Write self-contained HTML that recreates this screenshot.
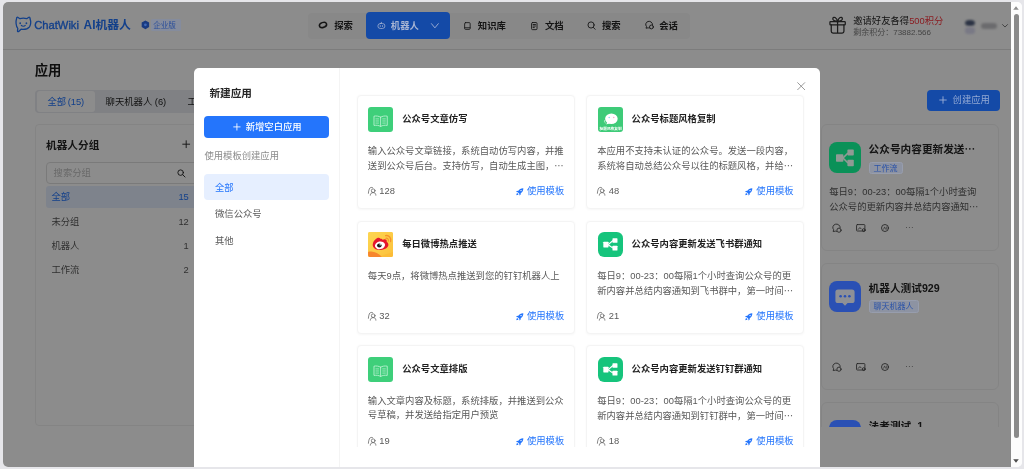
<!DOCTYPE html>
<html lang="zh-CN">
<head>
<meta charset="utf-8">
<title>ChatWiki AI机器人 - 应用</title>
<style>
*{box-sizing:border-box;margin:0;padding:0}
html,body{width:1024px;height:469px;overflow:hidden;background:#e6e6ea}
body{font-family:"Liberation Sans","Noto Sans CJK SC",sans-serif;font-size:9.33px;color:#262626;position:relative}
#win{position:absolute;left:3px;top:2px;width:1018.5px;height:464.8px;border-radius:5px;overflow:hidden;background:#fff;will-change:transform}
#o{position:absolute;left:-3px;top:-2px;width:1024px;height:469px}
#page{position:absolute;left:3px;top:2px;width:1008px;height:465px;background:#fff;overflow:hidden}
#pg{position:absolute;left:-3px;top:-2px;width:1024px;height:469px}
#mask{position:absolute;left:3px;top:2px;width:1008px;height:465px;background:rgba(0,0,0,.45)}
.a{position:absolute}
.t{position:absolute;white-space:nowrap;line-height:14px;height:14px}
svg{position:absolute;overflow:visible}
/* scrollbar */
#sb{position:absolute;left:1011px;top:2px;width:11px;height:465px;background:#fdfdfd}
#sb .thumb{position:absolute;left:2.5px;top:11.8px;width:5.6px;height:424px;border-radius:3px;background:#8b8b8b}
/* header */
#hdr{position:absolute;left:3px;top:2px;width:1008px;height:48px;background:#fff;border-bottom:1px solid #e2e2e2}
#nav{position:absolute;left:308px;top:12.6px;width:381.6px;height:26px;background:#f7f7f8;border-radius:4px}
.nv{font-size:9.33px;font-weight:700;color:#262626;top:19px}
#nvact{position:absolute;left:366px;top:12.3px;width:83.5px;height:26.6px;border-radius:4px;background:#144aa7}
/* body behind */
.bcard{position:absolute;left:821px;width:178px;height:126.6px;border:1px solid #f1f1f1;border-radius:6px;background:#fff}
.tag{position:absolute;height:12.6px;line-height:12.6px;font-size:8px;color:#2a52a8;background:#8d93a2;border:0.5px solid #979dad;border-radius:2.5px;padding:0 4px;white-space:nowrap}
/* modal */
#modal{position:absolute;left:193.6px;top:68px;width:626.7px;height:420px;background:#fff;border-radius:5px;overflow:hidden}
#md{position:absolute;left:-193.6px;top:-68px;width:1024px;height:469px}
.card{position:absolute;width:218.4px;height:113.6px;border:0.7px solid #f4f4f4;border-radius:4px;background:#fff;box-shadow:0 0.6px 2.6px rgba(0,0,0,.035)}
.ic{position:absolute;width:25.2px;height:25.3px;border-radius:3px;overflow:hidden}
.tt{font-weight:700;font-size:9.33px;color:#1f1f1f}
.ds{font-size:9.33px;color:#595959}
.use{font-size:9.33px;color:#2475fc}
</style>
</head>
<body>
<div id="win"><div id="o">
<div id="page"><div id="pg">
<div id="hdr"></div>
<div id="nav"></div>
<svg style="left:14.5px;top:16.1px" width="16.6" height="17.1" viewBox="0 0 32 33" fill="none" stroke="#2475fc" stroke-width="2.5" stroke-linecap="round" stroke-linejoin="round"><path d="M3.2 4.2 C3 2.4 4.6 1.8 6 2.8 L9.4 5.2 C13 4.2 19 4.2 22.6 5.2 L26 2.8 C27.4 1.8 29 2.4 28.8 4.2 C30.6 9.5 30.8 16.5 28 20.8 C24.6 25.2 17.6 26.2 11.6 25.6 L7.2 29.8 C6 30.8 4.6 30.2 4.8 28.6 L5.4 23.8 C1.4 19.6 1.2 10 3.2 4.2 Z"/><path d="M12.2 18.2 C13.8 20.4 18.2 20.4 19.8 18.2" stroke-width="2.2"/><circle cx="10" cy="14" r="1.7" fill="#2475fc" stroke="none"/><circle cx="22" cy="14" r="1.7" fill="#2475fc" stroke="none"/></svg>
<div class="t " style="left:34.2px;top:18.00px;font-size:11.2px;font-weight:400;color:#2475fc;-webkit-text-stroke:0.35px #2475fc">ChatWiki</div>
<div class="t " style="left:83.6px;top:18.00px;font-size:11.85px;font-weight:700;color:#2475fc">AI机器人</div>
<svg style="left:318.4px;top:20.3px" width="10" height="10" viewBox="0 0 10 10" fill="none" stroke="#262626"><ellipse cx="5" cy="5" rx="3.7" ry="2.55" stroke-width="1.5" transform="rotate(-20 5 5)"/><path d="M1.2 6.9 C2.6 7.6 5.6 7.2 8 5.2" stroke-width="0.7" opacity=".7"/></svg>
<div class="t nv" style="left:334.2px;top:19.00px;">探索</div>
<svg style="left:464.2px;top:22px" width="6.8" height="8" viewBox="0 0 13 15.3" fill="none" stroke="#262626" stroke-width="1.6" stroke-linecap="round" stroke-linejoin="round"><rect x="1.2" y="1.2" width="10.6" height="12.9" rx="1.8"/><path d="M1.4 11H11.6"/></svg>
<div class="t nv" style="left:477.8px;top:19.00px;">知识库</div>
<svg style="left:531.2px;top:21.9px" width="6.6" height="8.2" viewBox="0 0 12 15" fill="none" stroke="#262626" stroke-width="1.6" stroke-linecap="round" stroke-linejoin="round" stroke-width="1.5"><rect x="1" y="1" width="10" height="13" rx="1.8"/><path d="M3.8 4.6H8.2M3.8 7.4H8.2M3.8 10.2H6"/></svg>
<div class="t nv" style="left:544.9px;top:19.00px;">文档</div>
<svg style="left:587.2px;top:21.2px" width="9" height="9.4" viewBox="0 0 16 17" fill="none" stroke="#262626" stroke-width="1.6" stroke-linecap="round" stroke-linejoin="round" stroke-width="1.5"><circle cx="7.2" cy="7.2" r="5.6"/><path d="M11.4 11.6 L14.6 15"/></svg>
<div class="t nv" style="left:602px;top:19.00px;">搜索</div>
<svg style="left:644.8px;top:21.4px" width="9.2" height="8.6" viewBox="0 0 10 8.8" fill="none" stroke="#262626" stroke-width="1.0" stroke-linecap="round" stroke-linejoin="round"><path d="M8.2 3.6 A3.7 3.4 0 1 0 1.6 5.6 L1.2 7.6 L3.4 7.1 C3.8 7.3 4.2 7.4 4.6 7.4"/><circle cx="7" cy="6.2" r="2.1"/></svg>
<div class="t nv" style="left:659.2px;top:19.00px;">会话</div>
<svg style="left:828.8px;top:15.9px" width="17.2" height="18" viewBox="0 0 26 27.2" fill="none" stroke="#333" stroke-width="1.9" stroke-linecap="round" stroke-linejoin="round"><rect x="1.4" y="8.6" width="23.2" height="4.8" rx="1"/><path d="M3.4 13.4V23.2A2.6 2.6 0 0 0 6 25.8H20A2.6 2.6 0 0 0 22.6 23.2V13.4M13 8.6V25.8"/><path d="M13 8.4 C9.4 8.2 5 6.6 5.8 3.4 C6.8 0.2 11.6 2.2 13 8.4 C14.4 2.2 19.2 0.2 20.2 3.4 C21 6.6 16.6 8.2 13 8.4Z"/></svg>
<div class="t " style="left:853.2px;top:13.60px;font-size:9.33px;color:#262626">邀请好友各得<span style="color:#fb363f">500积分</span></div>
<div class="t " style="left:853.2px;top:26.00px;font-size:8px;color:#7d7d7d">剩余积分：73882.566</div>
<div class="a" style="left:964.6px;top:19.6px;width:10.8px;height:6.8px;border-radius:50%;filter:blur(1.1px);background:#4f5d7c"></div>
<div class="a" style="left:965.4px;top:26.6px;width:9.4px;height:7px;border-radius:40%;filter:blur(1.2px);background:#dcdcf2"></div>
<div class="a" style="left:980.8px;top:22.8px;width:16.4px;height:6.2px;border-radius:3px;filter:blur(1.1px);background:#c4c4c8"></div>
<svg style="left:1002.2px;top:24.2px" width="6" height="3.6" viewBox="0 0 12 7" fill="none" stroke="#595959" stroke-width="1.6" stroke-linecap="round" stroke-linejoin="round"><path d="M1 1 L6 6 L11 1"/></svg>
<div class="t " style="left:34.8px;top:61.60px;font-size:13.33px;font-weight:700;color:#1a1a1a;height:18px;line-height:18px">应用</div>
<div class="a" style="left:35.4px;top:89.6px;width:300px;height:23px;background:#e9ebf0;border-radius:4px"></div>
<div class="a" style="left:36.8px;top:90.8px;width:58.4px;height:20.8px;background:#fff;border-radius:3px"></div>
<div class="t " style="left:47.6px;top:94.80px;color:#2475fc;word-spacing:-0.9px;letter-spacing:-0.05px">全部 (15)</div>
<div class="t " style="left:105.6px;top:94.80px;color:#262626">聊天机器人 (6)</div>
<div class="t " style="left:187.6px;top:94.80px;color:#262626">工作流 (9)</div>
<div class="a" style="left:35.4px;top:123.8px;width:300px;height:302.6px;border:1px solid #f0f0f0;border-radius:4px;background:#fff"></div>
<div class="t " style="left:46px;top:136.80px;font-size:10.67px;font-weight:700;color:#262626;height:16px;line-height:16px">机器人分组</div>
<svg style="left:182px;top:139.5px" width="8.4" height="8.4" viewBox="0 0 10 10" stroke="#262626" stroke-width="1.1" fill="none"><path d="M5 0.4V9.6M0.4 5H9.6"/></svg>
<div class="a" style="left:46px;top:162.3px;width:170px;height:21.5px;border:1px solid #dedede;border-radius:4px;background:#fff"></div>
<div class="t " style="left:53.6px;top:166.40px;color:#bfbfbf">搜索分组</div>
<svg style="left:177.1px;top:168.8px" width="8.8" height="8.8" viewBox="0 0 16 16" fill="none" stroke="#262626" stroke-width="1.7" stroke-linecap="round"><circle cx="6.6" cy="6.6" r="5"/><path d="M10.4 10.4 L14.6 14.6"/></svg>
<div class="a" style="left:46px;top:186.4px;width:170px;height:21.2px;background:#e6efff;border-radius:3px"></div>
<div class="t " style="left:51.4px;top:190.20px;color:#2475fc">全部</div>
<div class="t" style="left:160px;width:28.8px;text-align:right;top:190.20px;color:#2475fc">15</div>
<div class="t " style="left:51.4px;top:214.60px;color:#595959">未分组</div>
<div class="t" style="left:160px;width:28.8px;text-align:right;top:214.60px;color:#595959">12</div>
<div class="t " style="left:51.4px;top:239.20px;color:#595959">机器人</div>
<div class="t" style="left:160px;width:28.8px;text-align:right;top:239.20px;color:#595959">1</div>
<div class="t " style="left:51.4px;top:263.00px;color:#595959">工作流</div>
<div class="t" style="left:160px;width:28.8px;text-align:right;top:263.00px;color:#595959">2</div>
<div class="a" id="blist" style="left:815px;top:118px;width:196px;height:309px;overflow:hidden"><div class="a" style="left:-815px;top:-118px;width:1024px;height:469px">
<div class="bcard" style="top:124.3px"></div>
<div class="t " style="left:868.6px;top:141.30px;font-size:10.67px;font-weight:700;color:#262626;height:16px;line-height:16px">公众号内容更新发送<span style="font-family:'Noto Sans CJK SC',sans-serif">…</span></div>
<div class="t ds" style="left:829.2px;top:184.50px;">每日9：00-23：00每隔1个小时查询</div>
<div class="t ds" style="left:829.2px;top:198.50px;">公众号的更新内容并总结内容通知<span style="font-family:'Noto Sans CJK SC',sans-serif">…</span></div>
<svg style="left:832.2px;top:223.6px" width="10" height="8.8" viewBox="0 0 10 8.8" fill="none" stroke="#404040" stroke-linecap="round" stroke-linejoin="round" stroke-width="0.85"><path d="M8.2 3.6 A3.7 3.4 0 1 0 1.6 5.6 L1.2 7.6 L3.4 7.1 C3.8 7.3 4.2 7.4 4.6 7.4"/><circle cx="7" cy="6.2" r="2.1"/></svg>
<svg style="left:856.2px;top:223.7px" width="10" height="8.4" viewBox="0 0 18 15" fill="none" stroke="#404040" stroke-linecap="round" stroke-linejoin="round" stroke-width="1.5"><rect x="1" y="1" width="15" height="11.6" rx="1.4"/><path d="M4 9.6 L7 6.4 L9.4 8.8"/><circle cx="14" cy="11" r="2.6"/></svg>
<svg style="left:881px;top:223.8px" width="8" height="8" viewBox="0 0 8 8" fill="none" stroke="#404040" stroke-linecap="round" stroke-linejoin="round" stroke-width="0.85"><circle cx="4" cy="4" r="3.5"/><path d="M2.6 5.2 L3.6 2.9 L4.6 5.2 M5.7 2.9 V5.2" stroke-width="0.6"/></svg>
<div class="a" style="left:905.6px;top:227.1px;width:1.4px;height:1.4px;border-radius:1px;background:#6e6e6e;box-shadow:2.9px 0 #6e6e6e,5.8px 0 #6e6e6e"></div>
<div class="bcard" style="top:263.2px"></div>
<div class="t " style="left:868.6px;top:280.20px;font-size:10.67px;font-weight:700;color:#262626;height:16px;line-height:16px">机器人测试929</div>
<svg style="left:832.2px;top:362.5px" width="10" height="8.8" viewBox="0 0 10 8.8" fill="none" stroke="#404040" stroke-linecap="round" stroke-linejoin="round" stroke-width="0.85"><path d="M8.2 3.6 A3.7 3.4 0 1 0 1.6 5.6 L1.2 7.6 L3.4 7.1 C3.8 7.3 4.2 7.4 4.6 7.4"/><circle cx="7" cy="6.2" r="2.1"/></svg>
<svg style="left:856.2px;top:362.6px" width="10" height="8.4" viewBox="0 0 18 15" fill="none" stroke="#404040" stroke-linecap="round" stroke-linejoin="round" stroke-width="1.5"><rect x="1" y="1" width="15" height="11.6" rx="1.4"/><path d="M4 9.6 L7 6.4 L9.4 8.8"/><circle cx="14" cy="11" r="2.6"/></svg>
<svg style="left:881px;top:362.7px" width="8" height="8" viewBox="0 0 8 8" fill="none" stroke="#404040" stroke-linecap="round" stroke-linejoin="round" stroke-width="0.85"><circle cx="4" cy="4" r="3.5"/><path d="M2.6 5.2 L3.6 2.9 L4.6 5.2 M5.7 2.9 V5.2" stroke-width="0.6"/></svg>
<div class="a" style="left:905.6px;top:366.0px;width:1.4px;height:1.4px;border-radius:1px;background:#6e6e6e;box-shadow:2.9px 0 #6e6e6e,5.8px 0 #6e6e6e"></div>
<div class="bcard" style="top:402.3px"></div>
<div class="t " style="left:868.6px;top:417.90px;font-size:10.67px;font-weight:700;color:#262626;height:16px;line-height:16px">法者测试_1</div>
<svg style="left:832.2px;top:501.6px" width="10" height="8.8" viewBox="0 0 10 8.8" fill="none" stroke="#404040" stroke-linecap="round" stroke-linejoin="round" stroke-width="0.85"><path d="M8.2 3.6 A3.7 3.4 0 1 0 1.6 5.6 L1.2 7.6 L3.4 7.1 C3.8 7.3 4.2 7.4 4.6 7.4"/><circle cx="7" cy="6.2" r="2.1"/></svg>
<svg style="left:856.2px;top:501.7px" width="10" height="8.4" viewBox="0 0 18 15" fill="none" stroke="#404040" stroke-linecap="round" stroke-linejoin="round" stroke-width="1.5"><rect x="1" y="1" width="15" height="11.6" rx="1.4"/><path d="M4 9.6 L7 6.4 L9.4 8.8"/><circle cx="14" cy="11" r="2.6"/></svg>
<svg style="left:881px;top:501.8px" width="8" height="8" viewBox="0 0 8 8" fill="none" stroke="#404040" stroke-linecap="round" stroke-linejoin="round" stroke-width="0.85"><circle cx="4" cy="4" r="3.5"/><path d="M2.6 5.2 L3.6 2.9 L4.6 5.2 M5.7 2.9 V5.2" stroke-width="0.6"/></svg>
<div class="a" style="left:905.6px;top:505.1px;width:1.4px;height:1.4px;border-radius:1px;background:#6e6e6e;box-shadow:2.9px 0 #6e6e6e,5.8px 0 #6e6e6e"></div>
</div></div>
</div></div>
<div id="mask"></div>
<div class="a" style="left:150.6px;top:18.6px;width:30.6px;height:12.4px;background:#858c9d;border-radius:1.5px"></div>
<svg style="left:140.7px;top:20.2px" width="8.8" height="9.6" viewBox="0 0 18 19"><path d="M9 0.6 L16.6 5 V14 L9 18.4 L1.4 14 V5 Z" fill="#193a80"/><circle cx="9" cy="9.5" r="2.8" fill="#3f69b8"/></svg>
<div class="t " style="left:153.2px;top:18.60px;font-size:7.6px;color:#2b4f9a">企业版</div>
<div id="nvact"></div>
<svg style="left:376.6px;top:21.4px" width="8.8" height="9" viewBox="0 0 16 16" fill="none" stroke="#a4b2d2" stroke-width="1.4" stroke-linecap="round"><rect x="1.6" y="4.4" width="12.8" height="9" rx="4.4"/><path d="M8 2.2V4.2M6 8.2V9.8M10 8.2V9.8"/></svg>
<div class="t nv" style="left:390.8px;top:19.00px;color:#a9b6d4;font-weight:700">机器人</div>
<svg style="left:431px;top:22.8px" width="7.8" height="5.6" viewBox="0 0 16 11.5" fill="none" stroke="#9fb0d6" stroke-width="1.9" stroke-linecap="round" stroke-linejoin="round"><path d="M1 1.4 L8 10 L15 1.4"/></svg>
<div class="a" style="left:927px;top:89.6px;width:73px;height:21.2px;background:#144aa7;border-radius:4px"></div>
<svg style="left:938.6px;top:96.2px" width="8" height="8" viewBox="0 0 10 10" stroke="#9fb2d8" stroke-width="1.1" fill="none"><path d="M5 0.4V9.6M0.4 5H9.6"/></svg>
<div class="t " style="left:952.6px;top:93.30px;color:#93a9d4">创建应用</div>
<div class="a" style="left:815px;top:118px;width:196px;height:309px;overflow:hidden"><div class="a" style="left:-815px;top:-118px;width:1024px;height:469px"><div class="a" style="left:829px;top:141.6px;width:32px;height:31.8px;border-radius:8px;background:#0a9158"></div>
<svg style="left:829px;top:141.6px" width="32" height="32" viewBox="0 0 32 32" fill="#8f9a94" stroke="#8f9a94"><rect x="7" y="12.2" width="7.4" height="7.6" rx="0.8" stroke="none"/><rect x="18.4" y="7.6" width="6.4" height="6" rx="0.8" stroke="none"/><rect x="18.4" y="17.8" width="6.4" height="6.4" rx="0.8" stroke="none"/><path d="M14 16 L19 11 M14 16 L19 21" stroke-width="1.6" fill="none"/></svg>
<div class="tag" style="left:868.6px;top:161.5px">工作流</div>
<div class="a" style="left:829px;top:280.5px;width:32px;height:31.8px;border-radius:8px;background:#2a50b4"></div>
<svg style="left:829px;top:280.5px" width="32" height="32" viewBox="0 0 32 32"><path d="M9 8.4 H23 A2.6 2.6 0 0 1 25.6 11 V19.4 A2.6 2.6 0 0 1 23 22 H18.6 L16 24.8 L13.4 22 H9 A2.6 2.6 0 0 1 6.4 19.4 V11 A2.6 2.6 0 0 1 9 8.4 Z" fill="#8e9096"/><circle cx="11.6" cy="15.2" r="1.3" fill="#2a50b4"/><circle cx="16" cy="15.2" r="1.3" fill="#2a50b4"/><circle cx="20.4" cy="15.2" r="1.3" fill="#2a50b4"/></svg>
<div class="tag" style="left:868.6px;top:300.4px">聊天机器人</div>
<div class="a" style="left:829px;top:419.6px;width:32px;height:31.8px;border-radius:8px;background:#2a50b4"></div>
<svg style="left:829px;top:419.6px" width="32" height="32" viewBox="0 0 32 32"><path d="M9 8.4 H23 A2.6 2.6 0 0 1 25.6 11 V19.4 A2.6 2.6 0 0 1 23 22 H18.6 L16 24.8 L13.4 22 H9 A2.6 2.6 0 0 1 6.4 19.4 V11 A2.6 2.6 0 0 1 9 8.4 Z" fill="#8e9096"/><circle cx="11.6" cy="15.2" r="1.3" fill="#2a50b4"/><circle cx="16" cy="15.2" r="1.3" fill="#2a50b4"/><circle cx="20.4" cy="15.2" r="1.3" fill="#2a50b4"/></svg>
<div class="tag" style="left:868.6px;top:439.5px">聊天机器人</div></div></div>
<div id="modal"><div id="md">
<div class="a" style="left:193.6px;top:68px;width:146.6px;height:420px;border-right:1px solid #f4f4f4"></div>
<div class="t " style="left:209.4px;top:84.60px;font-size:10.67px;font-weight:700;color:#262626;height:16px;line-height:16px">新建应用</div>
<div class="a" style="left:204.2px;top:115.9px;width:124.8px;height:21.7px;background:#2475fc;border-radius:4px"></div>
<svg style="left:232.6px;top:122.8px" width="7.8" height="7.8" viewBox="0 0 10 10" stroke="#fff" stroke-width="1.1" fill="none"><path d="M5 0.4V9.6M0.4 5H9.6"/></svg>
<div class="t " style="left:245.7px;top:119.80px;color:#fff;font-weight:500">新增空白应用</div>
<div class="t " style="left:204.4px;top:148.60px;color:#8c8c8c">使用模板创建应用</div>
<div class="a" style="left:204.2px;top:173.5px;width:124.8px;height:26.6px;background:#e6efff;border-radius:4px"></div>
<div class="t " style="left:215px;top:180.50px;color:#2475fc">全部</div>
<div class="t " style="left:215px;top:207.40px;color:#595959">微信公众号</div>
<div class="t " style="left:215px;top:234.40px;color:#595959">其他</div>
<svg style="left:797.4px;top:81.9px" width="8.4" height="8.4" viewBox="0 0 10 10" stroke="#8c8c8c" stroke-width="1.05" fill="none" stroke-linecap="round"><path d="M0.8 0.8 L9.2 9.2 M9.2 0.8 L0.8 9.2"/></svg>
<div class="a" style="left:341px;top:80px;width:479px;height:367px;overflow:hidden"><div class="a" style="left:-341px;top:-80px;width:1024px;height:469px">
<div class="card" style="left:356.5px;top:95.3px"></div>
<div class="ic" style="left:368.0px;top:106.7px;background:#3ecf7a;border-radius:3px"><svg style="left:0;top:0" width="25.2" height="25.3" viewBox="0 0 25.2 25.4" fill="none" stroke="#b8f0d0" stroke-width="0.95" stroke-linejoin="round" stroke-linecap="round"><g transform="translate(0.65 1.5) scale(0.95)"><path d="M12.6 9.2 C10.6 7.9 8 7.7 5.6 8.1 V17.9 C8 17.5 10.6 17.7 12.6 19 C14.6 17.7 17.2 17.5 19.6 17.9 V8.1 C17.2 7.7 14.6 7.9 12.6 9.2 Z M12.6 9.2 V19"/><path d="M7.6 11 H10.4 M7.6 13.2 H10.4 M7.6 15.4 H10.4 M14.8 11 H17.6 M14.8 13.2 H17.6 M14.8 15.4 H17.6" stroke-width="0.8"/></g></svg></div>
<div class="t tt" style="left:402.2px;top:112.00px;">公众号文章仿写</div>
<div class="t ds" style="left:367.8px;top:144.00px;">输入公众号文章链接，系统自动仿写内容，并推</div>
<div class="t ds" style="left:367.8px;top:158.20px;">送到公众号后台。支持仿写，自动生成主图，<span style="font-family:'Noto Sans CJK SC',sans-serif">…</span></div>
<svg style="left:367.9px;top:186.8px" width="8.2" height="8.6" viewBox="0 0 8.2 8.6" fill="none" stroke="#5c5c5c" stroke-width="0.75" stroke-linecap="round" stroke-linejoin="round"><circle cx="5.2" cy="3.7" r="1.85"/><path d="M2.3 8.2 C2.3 6.4 3.6 5.6 5.2 5.6 C6.8 5.6 7.9 6.4 7.9 8.2"/><path d="M0.4 6.3 C0.5 4.2 1 2.2 1.9 1 C2.6 0.3 3.7 0.3 4.5 0.6"/></svg>
<div class="t ds" style="left:379.3px;top:184.00px;">128</div>
<svg style="left:515.9px;top:187.7px" width="7.6" height="7.6" viewBox="0 0 16 16" fill="#2475fc"><path d="M15.4 0.6 C10.6 0.4 7.2 2.4 5 6 L1.6 6.4 L0.4 8.6 L3.8 9 L7 12.2 L7.4 15.6 L9.6 14.4 L10 11 C13.6 8.8 15.6 5.4 15.4 0.6 Z M10.6 7 A1.5 1.5 0 1 1 10.6 4 A1.5 1.5 0 0 1 10.6 7 Z" fill-rule="evenodd"/><path d="M2.6 10.6 C1.4 11.4 0.8 13.2 0.8 15.2 C2.8 15.2 4.6 14.6 5.4 13.4 Z"/></svg>
<div class="t use" style="left:526.9px;top:184.00px;">使用模板</div>
<div class="card" style="left:585.9px;top:95.3px"></div>
<div class="ic" style="left:597.8px;top:106.7px;background:#3ecb78;border-radius:3px"><svg style="left:0;top:0" width="25.2" height="25.3" viewBox="0 0 25.2 25.4"><ellipse cx="13.4" cy="11.8" rx="6.3" ry="5.3" fill="#fff"/><path d="M9.4 15 L8.2 17.6 L11.8 16.4 Z" fill="#fff"/><path d="M7.4 12.6 C6 13.6 6.2 15.4 7.6 16.2" stroke="#c6f0d6" stroke-width="0.9" fill="none"/><circle cx="11.2" cy="10.6" r="0.75" fill="#7fd9f0"/><circle cx="15.8" cy="10.6" r="0.75" fill="#f7a8c0"/><text x="12.6" y="23.4" text-anchor="middle" font-size="3.7" font-weight="700" fill="#fff" font-family="'Liberation Sans','Noto Sans CJK SC',sans-serif">标题风格复制</text></svg></div>
<div class="t tt" style="left:631.6px;top:112.00px;">公众号标题风格复制</div>
<div class="t ds" style="left:597.1999999999999px;top:144.00px;">本应用不支持未认证的公众号。发送一段内容，</div>
<div class="t ds" style="left:597.1999999999999px;top:158.20px;">系统将自动总结公众号以往的标题风格，并给<span style="font-family:'Noto Sans CJK SC',sans-serif">…</span></div>
<svg style="left:597.3px;top:186.8px" width="8.2" height="8.6" viewBox="0 0 8.2 8.6" fill="none" stroke="#5c5c5c" stroke-width="0.75" stroke-linecap="round" stroke-linejoin="round"><circle cx="5.2" cy="3.7" r="1.85"/><path d="M2.3 8.2 C2.3 6.4 3.6 5.6 5.2 5.6 C6.8 5.6 7.9 6.4 7.9 8.2"/><path d="M0.4 6.3 C0.5 4.2 1 2.2 1.9 1 C2.6 0.3 3.7 0.3 4.5 0.6"/></svg>
<div class="t ds" style="left:608.6999999999999px;top:184.00px;">48</div>
<svg style="left:745.3px;top:187.7px" width="7.6" height="7.6" viewBox="0 0 16 16" fill="#2475fc"><path d="M15.4 0.6 C10.6 0.4 7.2 2.4 5 6 L1.6 6.4 L0.4 8.6 L3.8 9 L7 12.2 L7.4 15.6 L9.6 14.4 L10 11 C13.6 8.8 15.6 5.4 15.4 0.6 Z M10.6 7 A1.5 1.5 0 1 1 10.6 4 A1.5 1.5 0 0 1 10.6 7 Z" fill-rule="evenodd"/><path d="M2.6 10.6 C1.4 11.4 0.8 13.2 0.8 15.2 C2.8 15.2 4.6 14.6 5.4 13.4 Z"/></svg>
<div class="t use" style="left:756.3px;top:184.00px;">使用模板</div>
<div class="card" style="left:356.5px;top:220.5px"></div>
<div class="ic" style="left:368.0px;top:231.6px;background:#fdd04a;border-radius:2px"><svg style="left:0;top:0" width="25.2" height="25.3" viewBox="0 0 25.2 25.4"><defs><linearGradient id="wbg" x1="0" y1="0" x2="1" y2="1"><stop offset="0" stop-color="#fdd651"/><stop offset="1" stop-color="#fcc13c"/></linearGradient></defs><rect width="25.2" height="25.4" fill="url(#wbg)"/><path d="M0 20.2 C5 18.6 10 21 14.5 25.4 H0 Z" fill="#f7862d"/><path d="M12 25.4 C15 22 20 22.5 25.2 20 V25.4 Z" fill="#fbb733" opacity=".6"/><g transform="translate(-1.1 -1.5) scale(1.09)"><path d="M12.4 7.6 C10.6 5.2 6.6 8.4 5.6 11.6 C4.2 15.8 8.2 18.4 12.6 18 C17 17.6 20.6 15.2 19.6 12.2 C19.2 11 18 10.8 18.2 10 C18.6 8.2 16.4 7.4 14.4 8.6 C14.2 8 13.2 7.4 12.4 7.6 Z" fill="#e6162d"/><ellipse cx="12" cy="13.6" rx="4.7" ry="3.5" fill="#fff" transform="rotate(-12 12 13.6)"/><ellipse cx="11.4" cy="13.8" rx="2.1" ry="1.9" fill="#1a1a1a"/><circle cx="12.2" cy="13.1" r="0.6" fill="#fff"/></g><path d="M17.6 3.6 C21 3 23.6 6 22.6 9.6" stroke="#f6922b" stroke-width="1.3" fill="none" stroke-linecap="round"/><path d="M17.8 6.2 C19.6 5.9 20.9 7.2 20.4 9.2" stroke="#f6922b" stroke-width="1.1" fill="none" stroke-linecap="round"/></svg></div>
<div class="t tt" style="left:402.2px;top:237.20px;">每日微博热点推送</div>
<div class="t ds" style="left:367.8px;top:269.20px;">每天9点，将微博热点推送到您的钉钉机器人上</div>
<svg style="left:367.9px;top:312.0px" width="8.2" height="8.6" viewBox="0 0 8.2 8.6" fill="none" stroke="#5c5c5c" stroke-width="0.75" stroke-linecap="round" stroke-linejoin="round"><circle cx="5.2" cy="3.7" r="1.85"/><path d="M2.3 8.2 C2.3 6.4 3.6 5.6 5.2 5.6 C6.8 5.6 7.9 6.4 7.9 8.2"/><path d="M0.4 6.3 C0.5 4.2 1 2.2 1.9 1 C2.6 0.3 3.7 0.3 4.5 0.6"/></svg>
<div class="t ds" style="left:379.3px;top:309.20px;">32</div>
<svg style="left:515.9px;top:312.9px" width="7.6" height="7.6" viewBox="0 0 16 16" fill="#2475fc"><path d="M15.4 0.6 C10.6 0.4 7.2 2.4 5 6 L1.6 6.4 L0.4 8.6 L3.8 9 L7 12.2 L7.4 15.6 L9.6 14.4 L10 11 C13.6 8.8 15.6 5.4 15.4 0.6 Z M10.6 7 A1.5 1.5 0 1 1 10.6 4 A1.5 1.5 0 0 1 10.6 7 Z" fill-rule="evenodd"/><path d="M2.6 10.6 C1.4 11.4 0.8 13.2 0.8 15.2 C2.8 15.2 4.6 14.6 5.4 13.4 Z"/></svg>
<div class="t use" style="left:526.9px;top:309.20px;">使用模板</div>
<div class="card" style="left:585.9px;top:220.5px"></div>
<div class="ic" style="left:597.8px;top:231.6px;background:#16c47c;border-radius:6.2px"><svg style="left:0;top:0" width="25.2" height="25.3" viewBox="0 0 25.2 25.4" fill="#fff"><rect x="5.3" y="9.9" width="5.2" height="5.6" rx="0.5"/><rect x="14.5" y="6.3" width="5" height="4.6" rx="0.5"/><rect x="14.5" y="13.8" width="5" height="4.8" rx="0.5"/><path d="M10.2 12.7 L15 8.6 M10.2 12.7 L15 16.2" stroke="#fff" stroke-width="1.2" fill="none"/></svg></div>
<div class="t tt" style="left:631.6px;top:237.20px;">公众号内容更新发送飞书群通知</div>
<div class="t ds" style="left:597.1999999999999px;top:269.20px;">每日9：00-23：00每隔1个小时查询公众号的更</div>
<div class="t ds" style="left:597.1999999999999px;top:283.40px;">新内容并总结内容通知到飞书群中，第一时间<span style="font-family:'Noto Sans CJK SC',sans-serif">…</span></div>
<svg style="left:597.3px;top:312.0px" width="8.2" height="8.6" viewBox="0 0 8.2 8.6" fill="none" stroke="#5c5c5c" stroke-width="0.75" stroke-linecap="round" stroke-linejoin="round"><circle cx="5.2" cy="3.7" r="1.85"/><path d="M2.3 8.2 C2.3 6.4 3.6 5.6 5.2 5.6 C6.8 5.6 7.9 6.4 7.9 8.2"/><path d="M0.4 6.3 C0.5 4.2 1 2.2 1.9 1 C2.6 0.3 3.7 0.3 4.5 0.6"/></svg>
<div class="t ds" style="left:608.6999999999999px;top:309.20px;">21</div>
<svg style="left:745.3px;top:312.9px" width="7.6" height="7.6" viewBox="0 0 16 16" fill="#2475fc"><path d="M15.4 0.6 C10.6 0.4 7.2 2.4 5 6 L1.6 6.4 L0.4 8.6 L3.8 9 L7 12.2 L7.4 15.6 L9.6 14.4 L10 11 C13.6 8.8 15.6 5.4 15.4 0.6 Z M10.6 7 A1.5 1.5 0 1 1 10.6 4 A1.5 1.5 0 0 1 10.6 7 Z" fill-rule="evenodd"/><path d="M2.6 10.6 C1.4 11.4 0.8 13.2 0.8 15.2 C2.8 15.2 4.6 14.6 5.4 13.4 Z"/></svg>
<div class="t use" style="left:756.3px;top:309.20px;">使用模板</div>
<div class="card" style="left:356.5px;top:345.4px"></div>
<div class="ic" style="left:368.0px;top:356.5px;background:#3ecf7a;border-radius:3px"><svg style="left:0;top:0" width="25.2" height="25.3" viewBox="0 0 25.2 25.4" fill="none" stroke="#b8f0d0" stroke-width="0.95" stroke-linejoin="round" stroke-linecap="round"><g transform="translate(0.65 1.5) scale(0.95)"><path d="M12.6 9.2 C10.6 7.9 8 7.7 5.6 8.1 V17.9 C8 17.5 10.6 17.7 12.6 19 C14.6 17.7 17.2 17.5 19.6 17.9 V8.1 C17.2 7.7 14.6 7.9 12.6 9.2 Z M12.6 9.2 V19"/><path d="M7.6 11 H10.4 M7.6 13.2 H10.4 M7.6 15.4 H10.4 M14.8 11 H17.6 M14.8 13.2 H17.6 M14.8 15.4 H17.6" stroke-width="0.8"/></g></svg></div>
<div class="t tt" style="left:402.2px;top:362.10px;">公众号文章排版</div>
<div class="t ds" style="left:367.8px;top:394.10px;">输入文章内容及标题，系统排版，并推送到公众</div>
<div class="t ds" style="left:367.8px;top:408.30px;">号草稿，并发送给指定用户预览</div>
<svg style="left:367.9px;top:436.9px" width="8.2" height="8.6" viewBox="0 0 8.2 8.6" fill="none" stroke="#5c5c5c" stroke-width="0.75" stroke-linecap="round" stroke-linejoin="round"><circle cx="5.2" cy="3.7" r="1.85"/><path d="M2.3 8.2 C2.3 6.4 3.6 5.6 5.2 5.6 C6.8 5.6 7.9 6.4 7.9 8.2"/><path d="M0.4 6.3 C0.5 4.2 1 2.2 1.9 1 C2.6 0.3 3.7 0.3 4.5 0.6"/></svg>
<div class="t ds" style="left:379.3px;top:434.10px;">19</div>
<svg style="left:515.9px;top:437.8px" width="7.6" height="7.6" viewBox="0 0 16 16" fill="#2475fc"><path d="M15.4 0.6 C10.6 0.4 7.2 2.4 5 6 L1.6 6.4 L0.4 8.6 L3.8 9 L7 12.2 L7.4 15.6 L9.6 14.4 L10 11 C13.6 8.8 15.6 5.4 15.4 0.6 Z M10.6 7 A1.5 1.5 0 1 1 10.6 4 A1.5 1.5 0 0 1 10.6 7 Z" fill-rule="evenodd"/><path d="M2.6 10.6 C1.4 11.4 0.8 13.2 0.8 15.2 C2.8 15.2 4.6 14.6 5.4 13.4 Z"/></svg>
<div class="t use" style="left:526.9px;top:434.10px;">使用模板</div>
<div class="card" style="left:585.9px;top:345.4px"></div>
<div class="ic" style="left:597.8px;top:356.5px;background:#16c47c;border-radius:6.2px"><svg style="left:0;top:0" width="25.2" height="25.3" viewBox="0 0 25.2 25.4" fill="#fff"><rect x="5.3" y="9.9" width="5.2" height="5.6" rx="0.5"/><rect x="14.5" y="6.3" width="5" height="4.6" rx="0.5"/><rect x="14.5" y="13.8" width="5" height="4.8" rx="0.5"/><path d="M10.2 12.7 L15 8.6 M10.2 12.7 L15 16.2" stroke="#fff" stroke-width="1.2" fill="none"/></svg></div>
<div class="t tt" style="left:631.6px;top:362.10px;">公众号内容更新发送钉钉群通知</div>
<div class="t ds" style="left:597.1999999999999px;top:394.10px;">每日9：00-23：00每隔1个小时查询公众号的更</div>
<div class="t ds" style="left:597.1999999999999px;top:408.30px;">新内容并总结内容通知到钉钉群中，第一时间<span style="font-family:'Noto Sans CJK SC',sans-serif">…</span></div>
<svg style="left:597.3px;top:436.9px" width="8.2" height="8.6" viewBox="0 0 8.2 8.6" fill="none" stroke="#5c5c5c" stroke-width="0.75" stroke-linecap="round" stroke-linejoin="round"><circle cx="5.2" cy="3.7" r="1.85"/><path d="M2.3 8.2 C2.3 6.4 3.6 5.6 5.2 5.6 C6.8 5.6 7.9 6.4 7.9 8.2"/><path d="M0.4 6.3 C0.5 4.2 1 2.2 1.9 1 C2.6 0.3 3.7 0.3 4.5 0.6"/></svg>
<div class="t ds" style="left:608.6999999999999px;top:434.10px;">18</div>
<svg style="left:745.3px;top:437.8px" width="7.6" height="7.6" viewBox="0 0 16 16" fill="#2475fc"><path d="M15.4 0.6 C10.6 0.4 7.2 2.4 5 6 L1.6 6.4 L0.4 8.6 L3.8 9 L7 12.2 L7.4 15.6 L9.6 14.4 L10 11 C13.6 8.8 15.6 5.4 15.4 0.6 Z M10.6 7 A1.5 1.5 0 1 1 10.6 4 A1.5 1.5 0 0 1 10.6 7 Z" fill-rule="evenodd"/><path d="M2.6 10.6 C1.4 11.4 0.8 13.2 0.8 15.2 C2.8 15.2 4.6 14.6 5.4 13.4 Z"/></svg>
<div class="t use" style="left:756.3px;top:434.10px;">使用模板</div>
</div></div>
</div></div>
<div id="sb"><div class="thumb"></div>
<svg style="left:2.4px;top:4px" width="6" height="4" viewBox="0 0 6 4"><path d="M3 0.3 L5.8 3.8 H0.2 Z" fill="#8f8f8f"/></svg>
<svg style="left:2.4px;top:456.8px" width="6" height="4" viewBox="0 0 6 4"><path d="M3 3.7 L5.8 0.2 H0.2 Z" fill="#4d4d4d"/></svg>
</div>
</div></div>
</body>
</html>
